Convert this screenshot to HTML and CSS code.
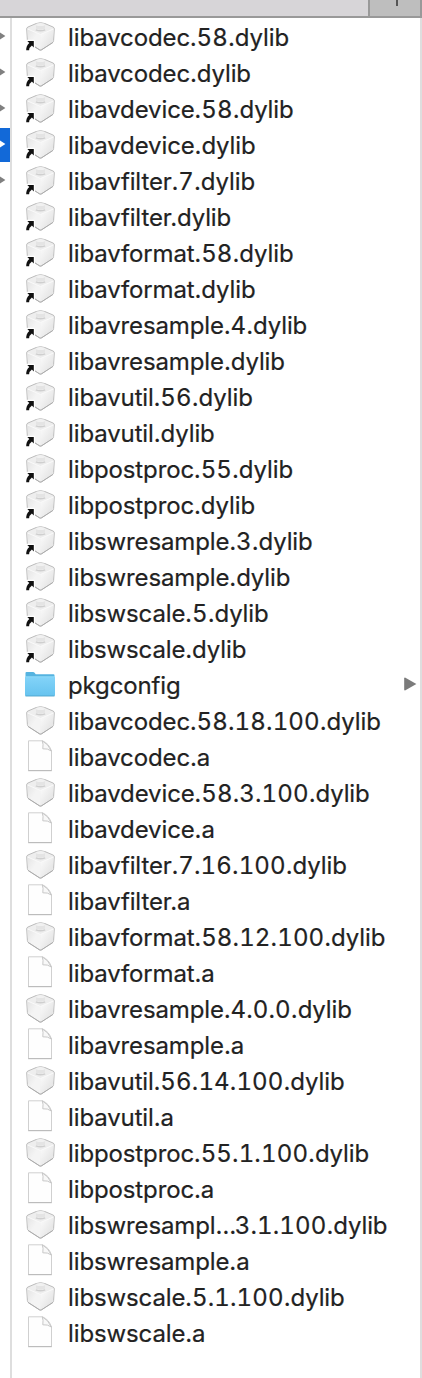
FILE: index.html
```
<!DOCTYPE html>
<html lang="en">
<head>
<meta charset="utf-8">
<title>lib</title>
<link rel="stylesheet" href="styles.css">
</head>
<body>
<svg class="defs" width="0" height="0">
  <defs>
    <linearGradient id="gl" x1="0" y1="0" x2="1" y2="1"><stop offset="0" stop-color="#e4e4e4"/><stop offset=".5" stop-color="#f4f4f4"/><stop offset="1" stop-color="#f4f4f4"/></linearGradient>
    <linearGradient id="gr" x1="0" y1="0" x2="1" y2="1"><stop offset="0" stop-color="#fcfcfc"/><stop offset="1" stop-color="#dedede"/></linearGradient>
    <linearGradient id="gf" x1="0" y1="0" x2="0" y2="1"><stop offset="0" stop-color="#83d3f8"/><stop offset="1" stop-color="#66c3ef"/></linearGradient>
    <symbol id="brick" viewBox="0 0 34 36">
      <path d="M12 3.6Q16.5 1.8 21 3.6L29 7Q30.4 7.6 30.3 9L29.6 20.5Q29.5 22 28.4 22.7L17.6 29.7Q16.5 30.4 15.4 29.7L4.6 22.7Q3.5 22 3.4 20.5L2.7 9Q2.6 7.6 4 7Z" fill="#eeeeee" stroke="#bcbcbc" stroke-width="1" stroke-linejoin="round"/>
      <path d="M3.4 9 16.5 14.5V29.6L4.2 21.8Z" fill="url(#gl)"/>
      <path d="M29.6 9 16.5 14.5V29.6L28.8 21.8Z" fill="url(#gr)"/>
      <path d="M3.6 9 16.5 14.5 29.4 9" fill="none" stroke="#fafafa" stroke-width="1"/>
      <path d="M12 4.6V8.8Q16.5 10.8 21 8.8V4.6Z" fill="#e4e4e4"/>
      <ellipse cx="16.5" cy="4.6" rx="4.5" ry="1.5" fill="#f1f1f1"/>
      <path d="M11.8 9.8Q16.5 11.8 21.2 9.8" fill="none" stroke="#cfcfcf" stroke-width="1.4"/>
      <path d="M4 22.4 15.4 29.8Q16.5 30.4 17.6 29.8L29 22.4" fill="none" stroke="#acacac" stroke-width="1"/>
    </symbol>
    <symbol id="alias" viewBox="0 0 34 36">
      <path d="M3.3 20.9H9.8V27.4L7.9 25.6Q5.4 27.3 5.1 30.2H2.2Q2 26 5.3 23Z" fill="#111" stroke="#fff" stroke-width="2.4" stroke-linejoin="round" paint-order="stroke"/>
    </symbol>
    <symbol id="doc" viewBox="0 0 34 36">
      <path d="M4.5 .8H18.5Q25 3.5 27.5 11V30.5H4.5Z" fill="#fefefe" stroke="#d0d0d0" stroke-width="1"/>
      <path d="M4.2 30.7H27.8" stroke="#b8b8b8"/>
      <path d="M18.3 .9Q19.5 4 18.8 8.8 23.8 8.3 27.3 11 24.5 4 18.3 .9Z" fill="#f8f8f8" stroke="#c2c2c2" stroke-width=".9"/>
    </symbol>
    <symbol id="folder" viewBox="0 0 34 36">
      <path d="M1.5 27.3V5Q1.5 4 2.5 4H9Q10 4 10.6 4.8L11.7 6.2H29.5Q30.5 6.2 30.5 7.2V27.3Z" fill="#55b3e0"/>
      <path d="M1 9H31V27Q31 28 30 28H2Q1 28 1 27Z" fill="url(#gf)"/>
      <path d="M1 8.7H31" stroke="#9bdffa" stroke-width=".8"/>
      <path d="M1.5 28H30.5" stroke="#4ea4cb" stroke-width=".9"/>
    </symbol>
    <symbol id="tri" viewBox="0 0 13 14" preserveAspectRatio="none"><path d="M1 .4 12.4 7 1 13.6Q.2 13.6 .2 12.8V1.2Q.2 .4 1 .4Z" fill="currentColor"/></symbol>
  </defs>
</svg>
<div class="browser">
  <header class="tabs"><div class="tab"></div><div class="new-tab"><span class="plus"></span></div></header>
  <main class="columns">
    <aside class="parent">
      <div class="cell"><svg><use href="#tri"/></svg></div>
      <div class="cell"><svg><use href="#tri"/></svg></div>
      <div class="cell"><svg><use href="#tri"/></svg></div>
      <div class="cell selected"><svg><use href="#tri"/></svg></div>
      <div class="cell"><svg><use href="#tri"/></svg></div>
    </aside>
    <ul class="files">
      <li><svg class="icon"><use href="#brick"/><use href="#alias"/></svg><span>libavcodec<i>.58</i>.dylib</span></li>
      <li><svg class="icon"><use href="#brick"/><use href="#alias"/></svg><span>libavcodec.dylib</span></li>
      <li><svg class="icon"><use href="#brick"/><use href="#alias"/></svg><span>libavdevice<i>.58</i>.dylib</span></li>
      <li><svg class="icon"><use href="#brick"/><use href="#alias"/></svg><span>libavdevice.dylib</span></li>
      <li><svg class="icon"><use href="#brick"/><use href="#alias"/></svg><span>libavfilter<i>.7</i>.dylib</span></li>
      <li><svg class="icon"><use href="#brick"/><use href="#alias"/></svg><span>libavfilter.dylib</span></li>
      <li><svg class="icon"><use href="#brick"/><use href="#alias"/></svg><span>libavformat<i>.58</i>.dylib</span></li>
      <li><svg class="icon"><use href="#brick"/><use href="#alias"/></svg><span>libavformat.dylib</span></li>
      <li><svg class="icon"><use href="#brick"/><use href="#alias"/></svg><span>libavresample<i>.4</i>.dylib</span></li>
      <li><svg class="icon"><use href="#brick"/><use href="#alias"/></svg><span>libavresample.dylib</span></li>
      <li><svg class="icon"><use href="#brick"/><use href="#alias"/></svg><span>libavutil<i>.56</i>.dylib</span></li>
      <li><svg class="icon"><use href="#brick"/><use href="#alias"/></svg><span>libavutil.dylib</span></li>
      <li><svg class="icon"><use href="#brick"/><use href="#alias"/></svg><span>libpostproc<i>.55</i>.dylib</span></li>
      <li><svg class="icon"><use href="#brick"/><use href="#alias"/></svg><span>libpostproc.dylib</span></li>
      <li><svg class="icon"><use href="#brick"/><use href="#alias"/></svg><span>libswresample<i>.3</i>.dylib</span></li>
      <li><svg class="icon"><use href="#brick"/><use href="#alias"/></svg><span>libswresample.dylib</span></li>
      <li><svg class="icon"><use href="#brick"/><use href="#alias"/></svg><span>libswscale<i>.5</i>.dylib</span></li>
      <li><svg class="icon"><use href="#brick"/><use href="#alias"/></svg><span>libswscale.dylib</span></li>
      <li><svg class="icon"><use href="#folder"/></svg><span>pkgconfig</span><svg class="chevron"><use href="#tri"/></svg></li>
      <li><svg class="icon"><use href="#brick"/></svg><span>libavcodec<i>.58.18.100</i>.dylib</span></li>
      <li><svg class="icon"><use href="#doc"/></svg><span>libavcodec.a</span></li>
      <li><svg class="icon"><use href="#brick"/></svg><span>libavdevice<i>.58.3.100</i>.dylib</span></li>
      <li><svg class="icon"><use href="#doc"/></svg><span>libavdevice.a</span></li>
      <li><svg class="icon"><use href="#brick"/></svg><span>libavfilter<i>.7.16.100</i>.dylib</span></li>
      <li><svg class="icon"><use href="#doc"/></svg><span>libavfilter.a</span></li>
      <li><svg class="icon"><use href="#brick"/></svg><span>libavformat<i>.58.12.100</i>.dylib</span></li>
      <li><svg class="icon"><use href="#doc"/></svg><span>libavformat.a</span></li>
      <li><svg class="icon"><use href="#brick"/></svg><span>libavresample<i>.4.0.0</i>.dylib</span></li>
      <li><svg class="icon"><use href="#doc"/></svg><span>libavresample.a</span></li>
      <li><svg class="icon"><use href="#brick"/></svg><span>libavutil<i>.56.14.100</i>.dylib</span></li>
      <li><svg class="icon"><use href="#doc"/></svg><span>libavutil.a</span></li>
      <li><svg class="icon"><use href="#brick"/></svg><span>libpostproc<i>.55.1.100</i>.dylib</span></li>
      <li><svg class="icon"><use href="#doc"/></svg><span>libpostproc.a</span></li>
      <li><svg class="icon"><use href="#brick"/></svg><span>libswresampl<em>…</em><i>3.1.100</i>.dylib</span></li>
      <li><svg class="icon"><use href="#doc"/></svg><span>libswresample.a</span></li>
      <li><svg class="icon"><use href="#brick"/></svg><span>libswscale<i>.5.1.100</i>.dylib</span></li>
      <li><svg class="icon"><use href="#doc"/></svg><span>libswscale.a</span></li>
    </ul>
  </main>
</div>
</body>
</html>
```
FILE: styles.css
```
* { box-sizing: border-box; }
body { margin: 0; background: #fff; }
.defs { display: block; }
.browser {
  width: 422px;
  height: 1378px;
  display: flex;
  flex-direction: column;
  overflow: hidden;
  font-family: Inter, sans-serif;
  color: #222;
}
.tabs {
  display: flex;
  height: 18px;
  border-bottom: 2px solid #999;
}
.tab { width: 368px; background: #d7d5d8; }
.new-tab {
  flex: 1;
  display: flex;
  padding-left: 26px;
  background: #bebebe;
  border-left: 2px solid #999;
  border-right: 2px solid #999;
}
.plus { width: 2px; height: 6px; background: #555; }
.columns { display: flex; flex: 1; }
.parent { width: 10px; padding-top: 2px; }
.cell {
  height: 34px;
  margin-bottom: 2px;
  display: flex;
  align-items: center;
  justify-content: flex-end;
  overflow: hidden;
  color: #808080;
  padding-right: 4px;
}
.cell svg { width: 13px; height: 16px; flex: none; margin-top: -2px; }
.selected { background: #1269d8; color: #fff; }
.files {
  flex: 1;
  margin: 0;
  padding: 2px 3px 0 12px;
  list-style: none;
  border-left: 2px solid #dedede;
  border-right: 2px solid #dedede;
}
.files li {
  display: flex;
  height: 36px;
  line-height: 36px;
  font-size: 24px;
  letter-spacing: -0.12px;
  white-space: nowrap;
  -webkit-text-stroke: .2px #222;
}
.files i {
  font-style: normal;
  font-variant-numeric: tabular-nums;
  font-kerning: none;
  letter-spacing: 0.15px;
}
.files em { font-style: normal; letter-spacing: -1.5px; }
.icon { width: 34px; height: 36px; flex: none; margin-right: 10px; }
.chevron { width: 13px; height: 14px; margin: 9px 0 0 auto; color: #7b7b7b; }
```
